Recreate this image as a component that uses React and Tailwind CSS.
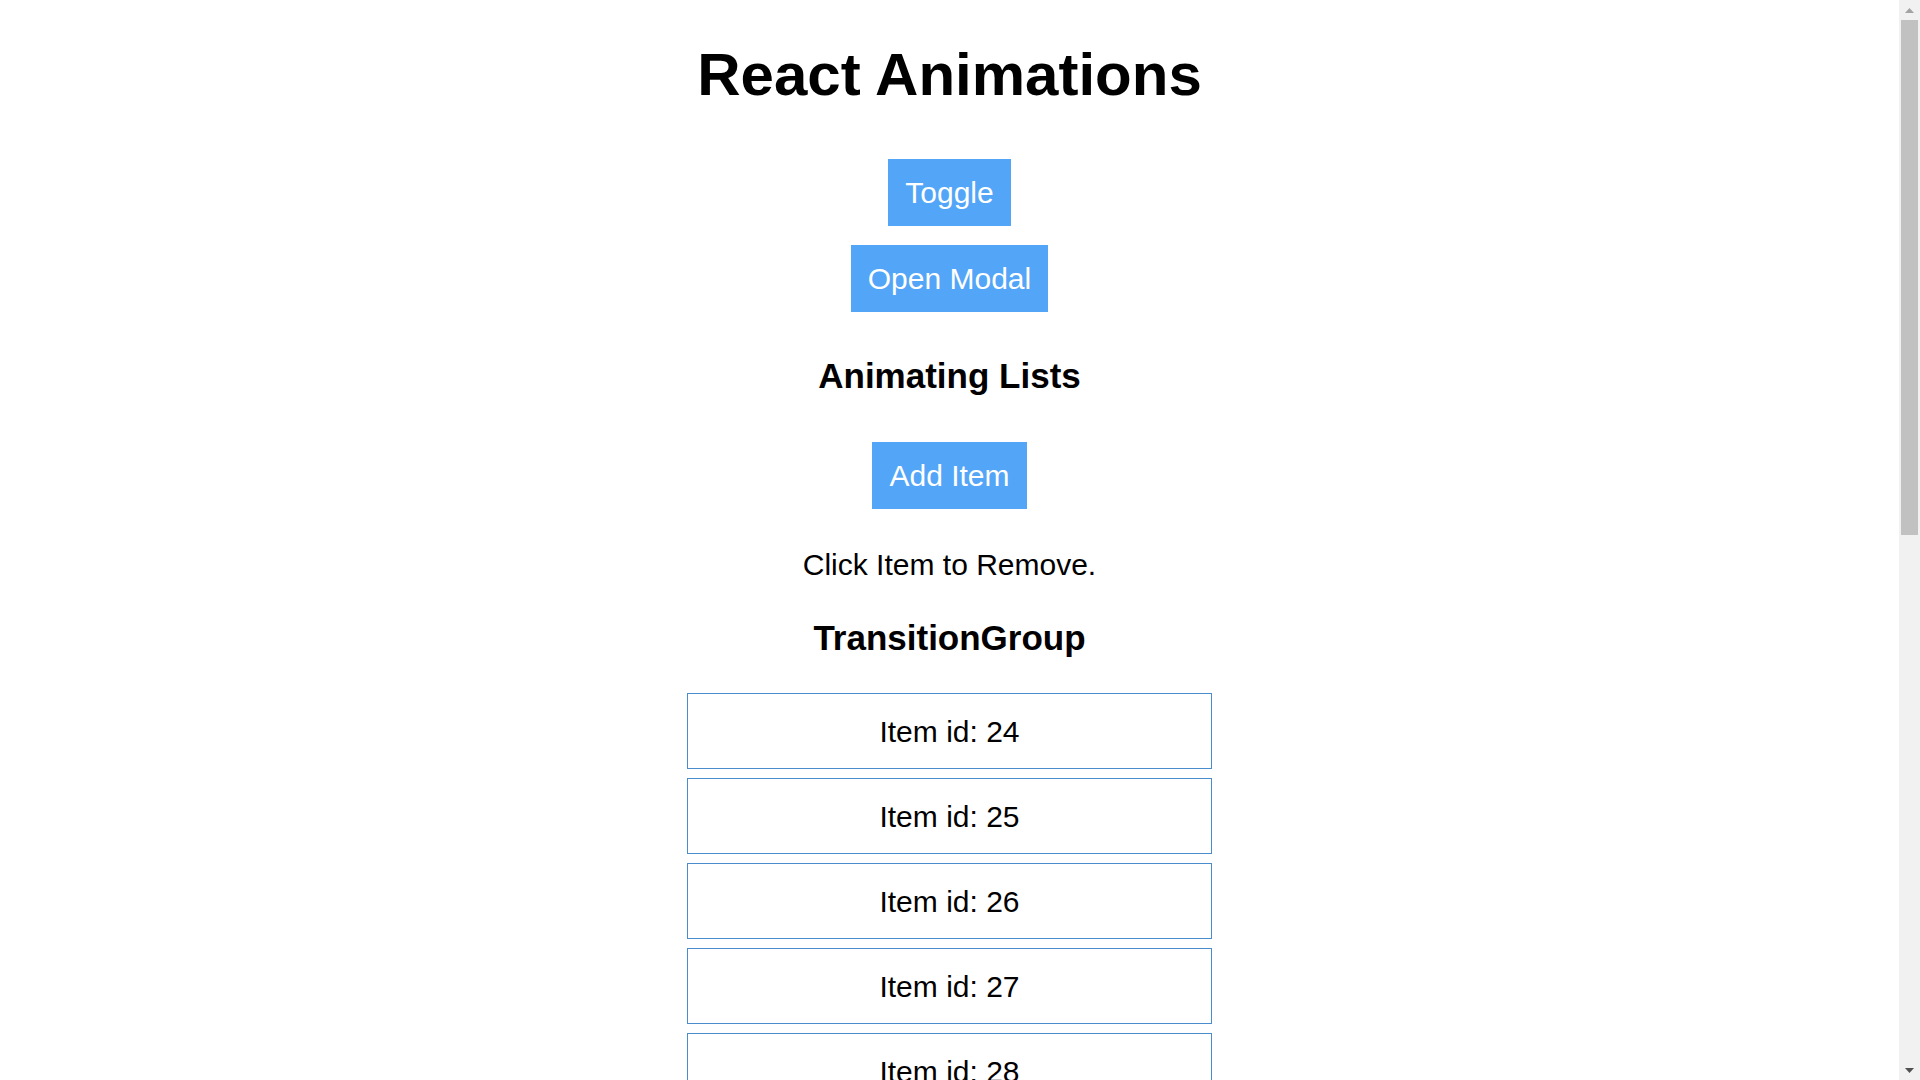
import { useState } from 'react'

const btn =
  'block bg-[#53a5f8] text-white text-[30px] leading-[35px] px-[17px] py-4 cursor-pointer'

function Scrollbar() {
  return (
    <div className="w-[21px] shrink-0 h-full bg-[#f1f1f1] flex flex-col items-center">
      <div className="h-[20px] w-full flex items-center justify-center">
        <svg width="9" height="5" viewBox="0 0 9 5">
          <path d="M4.5 0 L9 5 L0 5 Z" fill="#a3a3a3" />
        </svg>
      </div>
      <div className="w-[17px] h-[515px] bg-[#c1c1c1]" />
      <div className="flex-1" />
      <div className="h-[20px] w-full flex items-center justify-center">
        <svg width="9" height="5" viewBox="0 0 9 5">
          <path d="M0 0 L9 0 L4.5 5 Z" fill="#505050" />
        </svg>
      </div>
    </div>
  )
}

export default function App() {
  const [items, setItems] = useState([24, 25, 26, 27, 28, 29])
  const [shown, setShown] = useState(true)

  const addItem = () => setItems((prev) => [...prev, prev[prev.length - 1] + 1])
  const removeItem = (id) => setItems((prev) => prev.filter((i) => i !== id))

  return (
    <div className="h-screen flex overflow-hidden bg-white text-black font-['Liberation_Sans',Arial,sans-serif]">
      <div className="flex-1 min-w-0 flex flex-col items-center">
        <h1 className="mt-[40px] text-[60px] leading-[69px] font-bold">React Animations</h1>

        <button className={`${btn} mt-[50px]`} onClick={() => setShown(!shown)}>
          Toggle
        </button>
        <button className={`${btn} mt-[19px]`}>Open Modal</button>

        <h3 className="mt-[44px] text-[35px] leading-[40px] font-bold">Animating Lists</h3>
        <button className={`${btn} mt-[46px]`} onClick={addItem}>
          Add Item
        </button>
        <p className="mt-[38px] text-[30px] leading-[35px]">Click Item to Remove.</p>

        <h3 className="mt-[36px] text-[35px] leading-[40px] font-bold">TransitionGroup</h3>
        <ul className="mt-[35px] w-[525px] shrink-0 flex flex-col gap-[9px]">
          {items.map((id) => (
            <li
              key={id}
              onClick={() => removeItem(id)}
              className="h-[76px] shrink-0 border border-[#4a8ccc] flex items-center justify-center text-[30px] cursor-pointer"
            >
              Item id: {id}
            </li>
          ))}
        </ul>
      </div>
      <Scrollbar />
    </div>
  )
}
